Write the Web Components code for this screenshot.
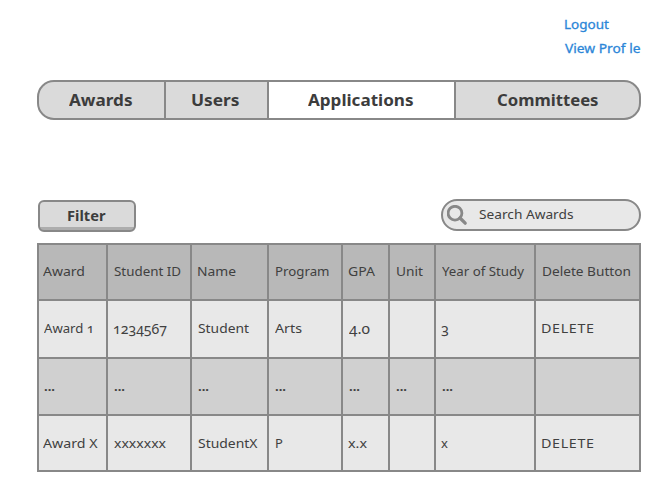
<!DOCTYPE html>
<html lang="en">
<head>
<meta charset="utf-8">
<title>Applications</title>
<style>
html,body{margin:0;background:#fff}
body{width:660px;height:491px;overflow:hidden;font-family:"Noto Sans","Open Sans",sans-serif;color:#404040}
</style>
</head>
<body>
<app-page></app-page>
<script>
// Text run whose glyphs widen to fill a given advance width.
class FitText extends HTMLElement {
  connectedCallback() {
    const root = this.attachShadow({mode: 'open'});
    root.innerHTML = `<style>
      :host{display:inline-block;white-space:pre;font-variant-numeric:oldstyle-nums;font-variant-ligatures:none}
      :host([numeric]){font-size:14.5px}
      :host([dots]){font-weight:700}
      span{display:inline-block;transform-origin:0 50%}
    </style><span></span>`;
    const span = root.querySelector('span');
    span.textContent = this.getAttribute('text');
    const width = +this.getAttribute('width');
    const count = span.textContent.length;
    if (width) {
      const natural = span.getBoundingClientRect().width;
      const scale = Math.min(1.1, Math.max(.95, width / natural));
      span.style.letterSpacing = ((width / scale - natural) / Math.max(1, count - 1)) + 'px';
      span.style.transform = `scaleX(${scale})`;
    }
  }
}
customElements.define('fit-text', FitText);

class UserLinks extends HTMLElement {
  connectedCallback() {
    this.attachShadow({mode: 'open'}).innerHTML = `
      <style>
        :host{display:flex;flex-direction:column;align-items:flex-start;padding:12px 0 0 564px;height:48px;font-size:13px;line-height:24px;-webkit-text-stroke:.3px #2b86d8}
        a{color:#2b86d8;text-decoration:none;display:block;height:24px}
        a + a{margin-left:1px}
      </style>
      <a href="#"><fit-text text="Logout" width="45"></fit-text></a>
      <a href="#"><fit-text text="View Prof le" width="75.5"></fit-text></a>`;
  }
}
customElements.define('user-links', UserLinks);

class NavTab extends HTMLElement {
  connectedCallback() {
    this.attachShadow({mode: 'open'}).innerHTML = `
      <style>
        :host{display:flex;background:#dadada;padding-left:var(--inset);box-sizing:border-box;height:36px;font-size:16.5px;font-weight:700;line-height:36px;color:#3c3c3c}
        :host([active]){background:#fff}
      </style><slot></slot>`;
  }
}
customElements.define('nav-tab', NavTab);

class NavBar extends HTMLElement {
  connectedCallback() {
    this.attachShadow({mode: 'open'}).innerHTML = `
      <style>
        :host{display:grid;grid-template-columns:125px 101px 185px 183px;gap:2px;background:#888;border:2px solid #888;border-radius:17px;overflow:hidden;box-sizing:border-box;width:604px;height:40px;margin:20px 0 0 37px}
      </style><slot></slot>`;
  }
}
customElements.define('nav-bar', NavBar);

class FilterButton extends HTMLElement {
  connectedCallback() {
    this.attachShadow({mode: 'open'}).innerHTML = `
      <style>
        :host{display:block}
        button{display:flex;margin:0;padding:0 0 0 27px;box-sizing:border-box;width:98px;height:32px;border:2px solid #888;border-radius:6px;background:linear-gradient(#dadada 25px,#adadad 25px);font:700 13.5px/28px "Noto Sans",sans-serif;color:#3c3c3c}
      </style><button><slot></slot></button>`;
  }
}
customElements.define('filter-button', FilterButton);

class SearchBox extends HTMLElement {
  connectedCallback() {
    this.attachShadow({mode: 'open'}).innerHTML = `
      <style>
        :host{display:flex;box-sizing:border-box;width:200px;height:32px;border:2px solid #888;border-radius:16px;background:#e8e8e8;padding-left:4px;font-size:13px;line-height:27px}
        svg{flex:none;width:21px;height:21px;margin:4px 11px 0 0}
      </style>
      <svg viewBox="0 0 21 21" fill="none" stroke="#888"><circle cx="8" cy="8.2" r="6.9" stroke-width="2.8"/><path d="M13 13 18.2 18.2" stroke-width="3.3" stroke-linecap="round"/></svg>
      <slot></slot>`;
  }
}
customElements.define('search-box', SearchBox);

class TableCell extends HTMLElement {
  connectedCallback() {
    this.attachShadow({mode: 'open'}).innerHTML = `
      <style>
        :host{display:flex;align-items:center;box-sizing:border-box;padding-left:var(--inset,6px);padding-bottom:2px;background:#e8e8e8;font-size:13px;line-height:18px;min-width:0}
        :host([tone="head"]){background:#b8b8b8}
        :host([tone="alt"]){background:#d0d0d0;padding-bottom:1px}
        :host([tone="last"]){padding-bottom:0}
      </style><slot></slot>`;
  }
}
customElements.define('table-cell', TableCell);

class DataTable extends HTMLElement {
  connectedCallback() {
    // Each cell: [label, inset from the cell edge, text width, text kind]
    const dots = i => ['...', i, 11, 'dots'];
    const rows = [
      ['head', [['Award',4,42],['Student ID',6,67],['Name',5,39],['Program',6,54.5],['GPA',5,27],['Unit',6,27],['Year of Study',6,82],['Delete Button',6,89]]],
      ['body', [['Award 1',5,50],['1234567',5,54,'numeric'],['Student',6,51],['Arts',6,27],['4.0',6,21,'numeric'],null,['3',5,0,'numeric'],['DELETE',5,53]]],
      ['alt', [dots(5),dots(6),dots(6),dots(6),dots(6),dots(6),dots(6),null]],
      ['last', [['Award X',4,54.5],['xxxxxxx',6,52],['StudentX',6,59.5],['P',6,0],['x.x',5,19],null,['x',5,0],['DELETE',5,53]]]
    ];
    this.attachShadow({mode: 'open'}).innerHTML = `
      <style>
        :host{display:grid;box-sizing:border-box;width:604px;height:229px;margin:11px 0 0 37px;padding:2px;gap:2px;background:#888;grid-template-columns:67px 82px 75px 72px 45px 44px 98px 103px;grid-template-rows:54px 56px 55px 54px}
      </style>` + rows.map(([tone, cells]) => cells.map(c => c
        ? `<table-cell tone="${tone}" style="--inset:${c[1]}px"><fit-text ${c[3] || ''} text="${c[0]}" width="${c[2]}"></fit-text></table-cell>`
        : `<table-cell tone="${tone}"></table-cell>`).join('')).join('');
  }
}
customElements.define('data-table', DataTable);

class AppPage extends HTMLElement {
  connectedCallback() {
    this.attachShadow({mode: 'open'}).innerHTML = `
      <style>
        :host{display:flex;flex-direction:column}
        .tools{display:flex;justify-content:space-between;align-items:flex-start;height:33px;margin:79px 19px 0 38px}
        filter-button{margin-top:1px}
      </style>
      <user-links></user-links>
      <nav-bar>
        <nav-tab style="--inset:30px"><fit-text text="Awards" width="63.5"></fit-text></nav-tab>
        <nav-tab style="--inset:25px"><fit-text text="Users" width="48.5"></fit-text></nav-tab>
        <nav-tab active style="--inset:39px"><fit-text text="Applications" width="105.5"></fit-text></nav-tab>
        <nav-tab style="--inset:41px"><fit-text text="Committees" width="101.5"></fit-text></nav-tab>
      </nav-bar>
      <div class="tools">
        <filter-button><fit-text text="Filter" width="38.5"></fit-text></filter-button>
        <search-box><fit-text text="Search Awards" width="94.5"></fit-text></search-box>
      </div>
      <data-table></data-table>`;
  }
}
customElements.define('app-page', AppPage);
</script>
</body>
</html>
